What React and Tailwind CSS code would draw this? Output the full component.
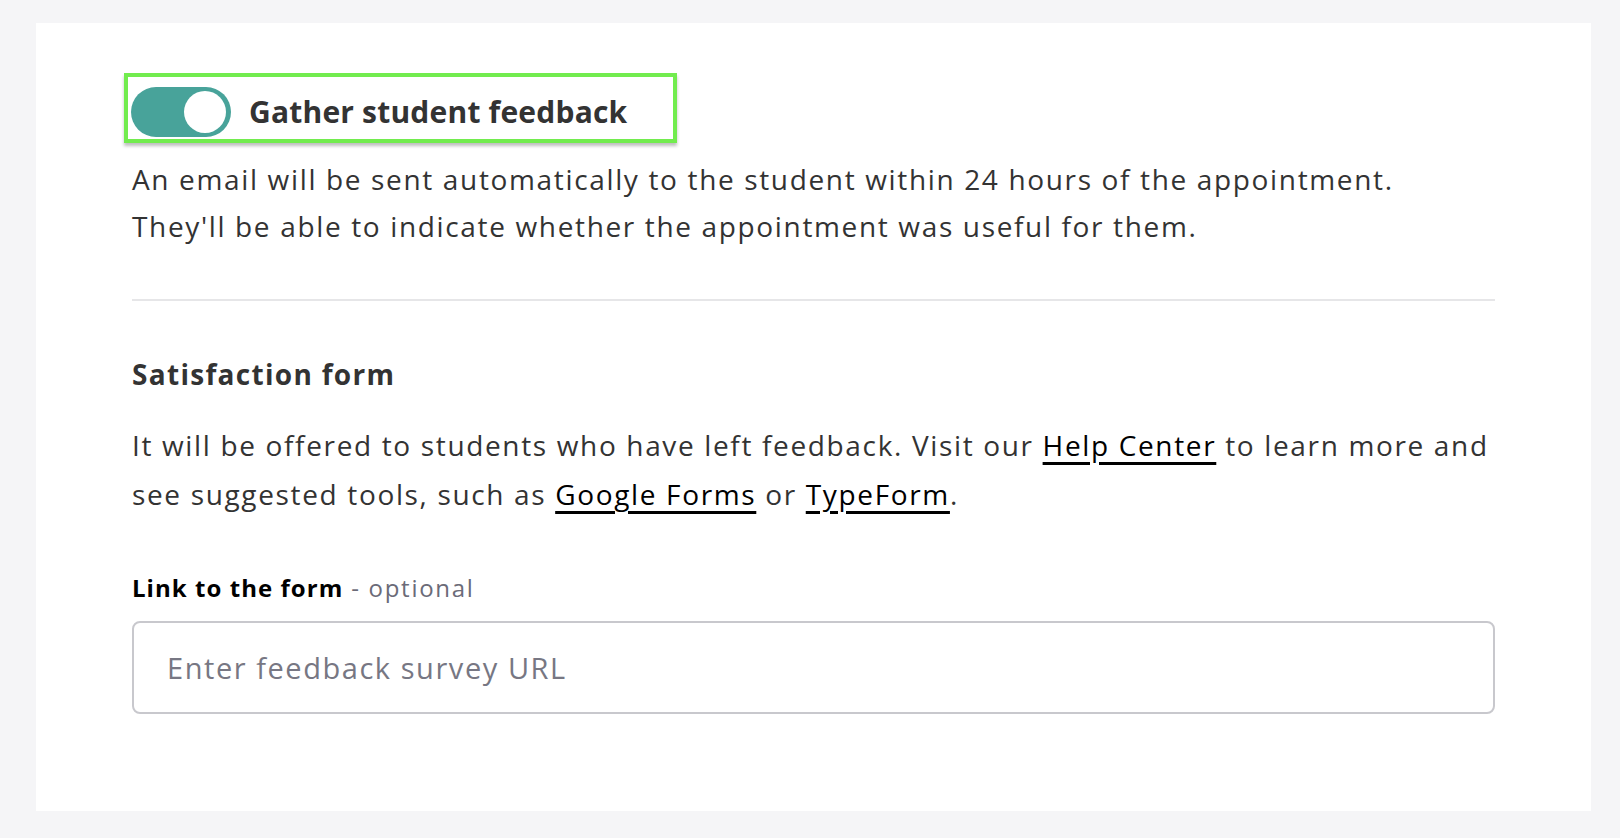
import { useState } from 'react'

function Toggle({ on, onChange }) {
  return (
    <button
      type="button"
      onClick={() => onChange(!on)}
      className={`relative w-[100px] h-[50px] rounded-full shrink-0 ${on ? 'bg-[#48a39a]' : 'bg-[#c8c8cd]'}`}
    >
      <span
        className={`absolute top-[4px] w-[42px] h-[42px] rounded-full bg-white ${on ? 'right-[5px]' : 'left-[5px]'}`}
      />
    </button>
  )
}

export default function App() {
  const [gather, setGather] = useState(true)
  const [url, setUrl] = useState('')

  return (
    <div className="min-h-[838px] bg-[#f5f5f7] pt-[23px] pl-[36px] font-['Open_Sans',sans-serif] text-[#333333]">
      <div className="w-[1555px] h-[788px] bg-white px-[96px] pt-[50px] flex flex-col">
        {/* Toggle with focus ring */}
        <div className="w-[553px] h-[70px] border-4 border-[#72ec4e] shadow-[0_3px_3px_rgba(0,0,0,0.25)] flex items-center pl-[3px] pt-[8px] gap-[18px] -ml-[8px]">
          <Toggle on={gather} onChange={setGather} />
          <span className="text-[30px] font-bold tracking-[0.2px] leading-none text-[#333333]">Gather student feedback</span>
        </div>

        <p className="mt-[13px] text-[28px] leading-[47px] tracking-[1.65px] whitespace-nowrap">
          An email will be sent automatically to the student within 24 hours of the appointment.
          <br />
          They'll be able to indicate whether the appointment was useful for them.
        </p>

        <div className="mt-[49px] h-[2px] bg-[#e6e6e8]" />

        <h2 className="mt-[55px] text-[28px] font-bold leading-[36px] tracking-[1.3px]">Satisfaction form</h2>

        <p className="mt-[29px] text-[28px] leading-[49px] tracking-[1.65px] whitespace-nowrap">
          It will be offered to students who have left feedback. Visit our{' '}
          <a href="#" className="text-black underline decoration-[3px] underline-offset-[6px]">Help Center</a>{' '}
          to learn more and
          <br />
          see suggested tools, such as{' '}
          <a href="#" className="text-black underline decoration-[3px] underline-offset-[6px]">Google Forms</a> or{' '}
          <a href="#" className="text-black underline decoration-[3px] underline-offset-[6px]">TypeForm</a>.
        </p>

        <label className="mt-[53px] text-[24px] leading-[32px]">
          <span className="font-bold text-black tracking-[1.05px]">Link to the form</span>
          <span className="text-[#6b6b78] tracking-[1.7px]"> - optional</span>
        </label>

        <input
          value={url}
          onChange={(e) => setUrl(e.target.value)}
          placeholder="Enter feedback survey URL"
          className="mt-[17px] h-[93px] w-full border-2 border-[#c8c8cd] rounded-[8px] px-[33px] text-[29px] tracking-[1.55px] text-[#333333] placeholder:text-[#777783] outline-none"
        />
      </div>
    </div>
  )
}
